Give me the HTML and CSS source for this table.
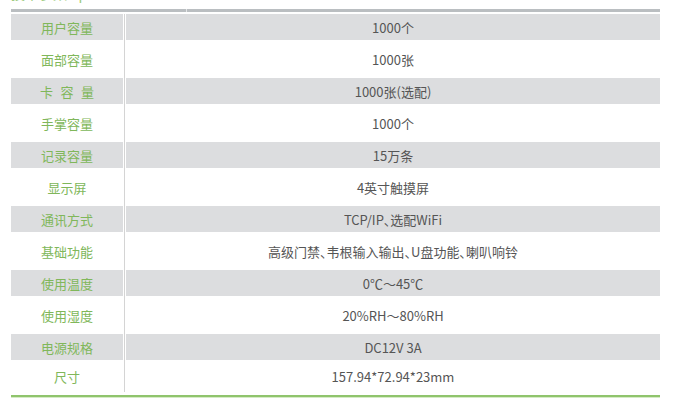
FILE: index.html
```html
<!DOCTYPE html>
<html lang="zh-CN">
<head>
<meta charset="utf-8">
<title>产品参数</title>
<link rel="stylesheet" href="styles.css">
</head>
<body>
<div class="sheet">
  <div class="heading"><span class="heading-text">技术参数 Specifications</span></div>
  <div class="topbar"></div>
  <div class="table">
    <div class="row shade"><div class="k">用户容量</div><div class="v">1000个</div></div>
    <div class="row"><div class="k">面部容量</div><div class="v">1000张</div></div>
    <div class="row shade"><div class="k"><span class="spread">卡容量</span></div><div class="v">1000张(选配)</div></div>
    <div class="row"><div class="k">手掌容量</div><div class="v">1000个</div></div>
    <div class="row shade"><div class="k">记录容量</div><div class="v">15万条</div></div>
    <div class="row"><div class="k">显示屏</div><div class="v">4英寸触摸屏</div></div>
    <div class="row shade"><div class="k">通讯方式</div><div class="v">TCP/IP、选配WiFi</div></div>
    <div class="row"><div class="k">基础功能</div><div class="v">高级门禁、韦根输入输出、U盘功能、喇叭响铃</div></div>
    <div class="row shade"><div class="k">使用温度</div><div class="v">0℃～45℃</div></div>
    <div class="row"><div class="k">使用湿度</div><div class="v">20%RH～80%RH</div></div>
    <div class="row shade"><div class="k">电源规格</div><div class="v">DC12V 3A</div></div>
    <div class="row last"><div class="k">尺寸</div><div class="v">157.94*72.94*23mm</div></div>
  </div>
  <div class="rule"></div>
  <p class="note">注：以上参数仅供参考，产品如有变更，恕不另行通知，以实物为准。</p>
</div>
</body>
</html>
```

FILE: styles.css
```css
html, body {
  margin: 0;
  padding: 0;
  background: #ffffff;
}

body {
  font-family: "Noto Sans CJK SC", "Noto Sans", sans-serif;
  font-size: 13px;
  overflow: hidden;
}

.sheet {
  width: 649px;
  margin-left: 11px;
}

.heading {
  height: 9px;
  overflow: hidden;
}

.heading-text {
  display: block;
  margin-top: -14px;
  font-size: 14px;
  line-height: 14px;
  color: #9ccb7c;
  white-space: nowrap;
}

.topbar {
  position: relative;
  height: 3px;
  background: #babec1;
  margin-bottom: 2px;
}

.topbar::after {
  content: "";
  position: absolute;
  left: 175px;
  top: 0;
  width: 1px;
  height: 3px;
  background: #e4e6e7;
}

.table {
  background: linear-gradient(#d4d4d4, #d4d4d4) no-repeat 113px 0 / 1px 100%;
}

.row {
  display: grid;
  grid-template-columns: 112px 534px;
  column-gap: 3px;
  height: 38px;
}

.row.shade {
  height: 26px;
}

.row.last {
  height: 32px;
}

.k, .v {
  display: flex;
  align-items: center;
  justify-content: center;
  white-space: nowrap;
}

.row.shade .k,
.row.shade .v {
  background: #dcdddf;
}

.k {
  color: #80b75a;
}

.v {
  color: #555555;
  font-feature-settings: "palt";
}

.spread {
  letter-spacing: 7.5px;
  margin-right: -7.5px;
}

.rule {
  height: 2px;
  margin-top: 3px;
  background: #8fc46c;
  border-bottom: 1px solid #d6ebc6;
}

.note {
  margin: 4px 0 0 -8px;
  color: #b5b5b5;
  font-size: 13px;
  line-height: 16px;
  white-space: nowrap;
}
```
